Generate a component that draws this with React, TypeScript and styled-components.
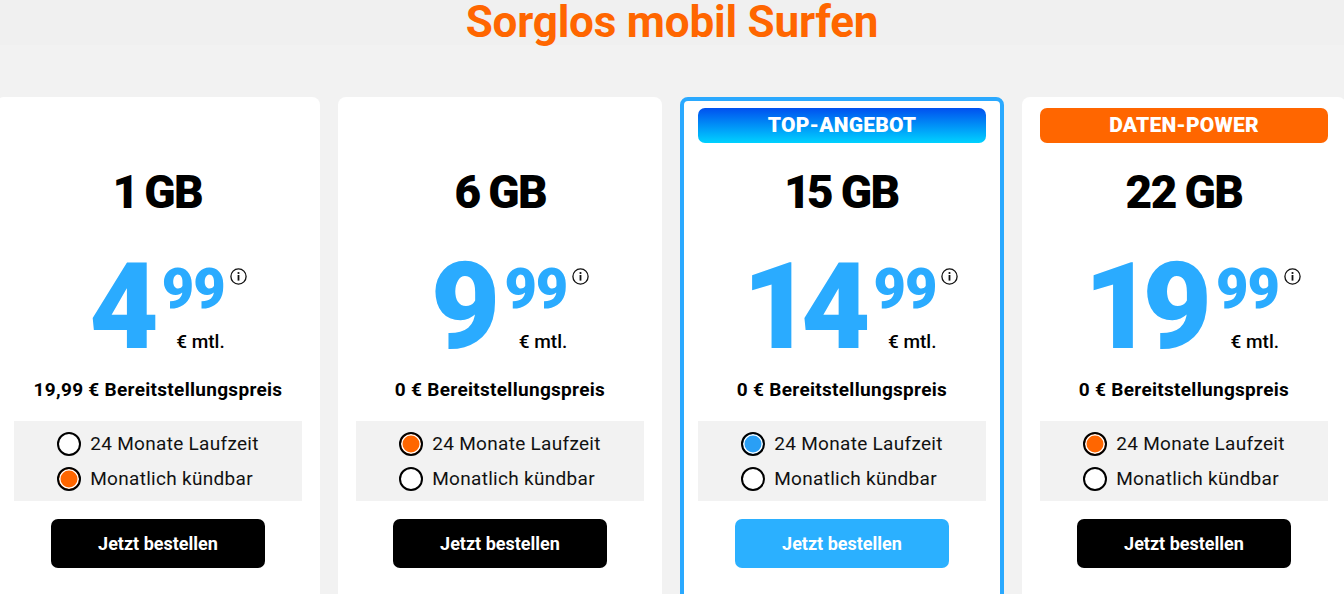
import React, { useState } from 'react';
import styled, { createGlobalStyle, css } from 'styled-components';

const GlobalStyle = createGlobalStyle`
	* { box-sizing: border-box; }
	html, body {
		margin: 0;
		padding: 0;
		background: #f2f2f2;
		font-family: Roboto, 'Liberation Sans', Arial, sans-serif;
	}
`;

type Variant = 'plain' | 'top' | 'power';

interface Plan {
	id: string;
	volume: string;
	euro: string;
	cent: string;
	setup: string;
	variant: Variant;
	badge?: string;
	defaultTerm: 'long' | 'monthly';
}

const plans: Plan[] = [
	{ id: 'p1', volume: '1 GB', euro: '4', cent: '99', setup: '19,99 €', variant: 'plain', defaultTerm: 'monthly' },
	{ id: 'p6', volume: '6 GB', euro: '9', cent: '99', setup: '0 €', variant: 'plain', defaultTerm: 'long' },
	{ id: 'p15', volume: '15 GB', euro: '14', cent: '99', setup: '0 €', variant: 'top', badge: 'TOP-ANGEBOT', defaultTerm: 'long' },
	{ id: 'p22', volume: '22 GB', euro: '19', cent: '99', setup: '0 €', variant: 'power', badge: 'DATEN-POWER', defaultTerm: 'long' },
];

const terms = [
	{ key: 'long', label: '24 Monate Laufzeit' },
	{ key: 'monthly', label: 'Monatlich kündbar' },
] as const;

function InfoIcon() {
	return (
		<svg width="17" height="17" viewBox="0 0 17 17">
			<circle cx="8.5" cy="8.5" r="7.6" fill="none" stroke="#111" strokeWidth="1.3" />
			<circle cx="8.5" cy="5" r="1.1" fill="#111" />
			<rect x="7.6" y="7" width="1.8" height="5.6" fill="#111" />
		</svg>
	);
}

function PlanCard({ plan }: { plan: Plan }) {
	const [term, setTerm] = useState<string>(plan.defaultTerm);
	const highlighted = plan.variant === 'top';

	return (
		<Card $highlighted={highlighted}>
			<Badge $variant={plan.variant}>{plan.badge}</Badge>
			<Volume>{plan.volume}</Volume>
			<PriceRow>
				<Euro>{plan.euro}</Euro>
				<PriceSide>
					<Cent>{plan.cent}</Cent>
					<Monthly>€ mtl.</Monthly>
				</PriceSide>
				<InfoWrap>
					<InfoIcon />
				</InfoWrap>
			</PriceRow>
			<Setup>{plan.setup} Bereitstellungspreis</Setup>
			<TermBox>
				<TermList>
					{terms.map((t) => (
						<TermOption key={t.key} onClick={() => setTerm(t.key)}>
							<RadioDot $checked={term === t.key} $color={highlighted ? '#2a9ff5' : '#ff6600'} />
							{t.label}
						</TermOption>
					))}
				</TermList>
			</TermBox>
			<OrderButton $highlighted={highlighted}>Jetzt bestellen</OrderButton>
		</Card>
	);
}

export default function App() {
	return (
		<Page>
			<GlobalStyle />
			<Header>
				<Title>Sorglos mobil Surfen</Title>
			</Header>
			<CardRow>
				{plans.map((p) => (
					<PlanCard key={p.id} plan={p} />
				))}
			</CardRow>
		</Page>
	);
}

const Page = styled.div`
	width: 1344px;
	height: 594px;
	overflow: hidden;
	background: #f2f2f2;
`;

const Header = styled.header`
	height: 45px;
	background: #f0f0f0;
	display: flex;
	justify-content: center;
	align-items: flex-start;
`;

const Title = styled.h1`
	margin: 0;
	font-size: 44px;
	line-height: 45px;
	font-weight: 700;
	color: #ff6600;
	letter-spacing: -0.2px;
`;

const CardRow = styled.div`
	display: flex;
	gap: 18px;
	margin-top: 52px;
	margin-left: -4px;
`;

const Card = styled.div<{ $highlighted: boolean }>`
	flex: 0 0 324px;
	height: 520px;
	background: #fff;
	border-radius: 8px;
	padding: 11px 18px 0;
	display: flex;
	flex-direction: column;
	align-items: center;
	${({ $highlighted }) =>
		$highlighted &&
		css`
			border: 4px solid #2aa9ff;
			padding: 7px 14px 0;
		`}
`;

const Badge = styled.div<{ $variant: Variant }>`
	width: 100%;
	height: 35px;
	border-radius: 7px;
	color: #fff;
	font-size: 21px;
	font-weight: 900;
	line-height: 35px;
	text-align: center;
	letter-spacing: 0.2px;
	visibility: ${({ $variant }) => ($variant === 'plain' ? 'hidden' : 'visible')};
	background: ${({ $variant }) =>
		$variant === 'top' ? 'linear-gradient(180deg, #0050ef 0%, #00d2ff 100%)' : '#ff6600'};
`;

const Volume = styled.div`
	margin-top: 25px;
	font-size: 46px;
	line-height: 48px;
	font-weight: 900;
	color: #000;
	letter-spacing: -1.6px;
	word-spacing: -1px;
	font-feature-settings: 'pnum';
`;

const PriceRow = styled.div`
	margin-top: 31px;
	display: flex;
	align-items: flex-start;
	color: #2aabff;
	margin-left: 20px;
`;

const Euro = styled.div`
	font-size: 120px;
	line-height: 120px;
	font-weight: 900;
	letter-spacing: -5px;
	font-feature-settings: 'pnum';
`;

const PriceSide = styled.div`
	display: flex;
	flex-direction: column;
	align-items: flex-end;
	margin-left: 8px;
`;

const Cent = styled.div`
	margin-top: 14px;
	font-size: 56px;
	line-height: 56px;
	font-weight: 900;
	letter-spacing: -1px;
`;

const Monthly = styled.div`
	margin-top: 15px;
	font-size: 19px;
	line-height: 19px;
	font-weight: 500;
	color: #000;
`;

const InfoWrap = styled.div`
	margin-top: 21px;
	margin-left: 5px;
	display: flex;
`;

const Setup = styled.div`
	margin-top: 12px;
	font-size: 19px;
	line-height: 22px;
	font-weight: 700;
	color: #000;
	letter-spacing: 0.3px;
`;

const TermBox = styled.div`
	margin-top: 20px;
	width: 100%;
	height: 80px;
	background: #f2f2f2;
	display: flex;
	justify-content: center;
	align-items: center;
`;

const TermList = styled.div`
	display: flex;
	flex-direction: column;
	gap: 10px;
`;

const TermOption = styled.label`
	display: flex;
	align-items: center;
	gap: 9px;
	font-size: 19px;
	line-height: 25px;
	color: #111;
	cursor: pointer;
	letter-spacing: 0.3px;
`;

const RadioDot = styled.span<{ $checked: boolean; $color: string }>`
	width: 24px;
	height: 24px;
	border-radius: 50%;
	border: 2.5px solid #000;
	background: ${({ $checked, $color }) => ($checked ? $color : '#fff')};
	box-shadow: ${({ $checked }) => ($checked ? 'inset 0 0 0 1.5px #fff' : 'none')};
	flex: 0 0 auto;
`;

const OrderButton = styled.button<{ $highlighted: boolean }>`
	margin-top: 18px;
	width: 214px;
	height: 49px;
	border: 0;
	border-radius: 7px;
	background: ${({ $highlighted }) => ($highlighted ? '#2bb0ff' : '#000')};
	color: #fff;
	font-family: inherit;
	font-size: 18px;
	font-weight: 700;
	cursor: pointer;
`;
